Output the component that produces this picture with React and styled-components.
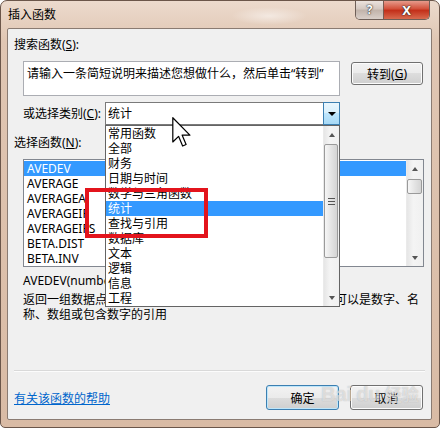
import React from 'react';
import styled, { createGlobalStyle } from 'styled-components';

const GlobalStyle = createGlobalStyle`
  body {
    margin: 0;
    background: #ffffff;
    font-family: "Noto Sans", "Noto Sans CJK SC", sans-serif;
    font-size: 12px;
    color: #000;
  }
  * {
    box-sizing: border-box;
  }
`;

const Window = styled.div`
  position: relative;
  width: 440px;
  height: 428px;
  display: flex;
  flex-direction: column;
  padding: 0 7px 7px 6px;
  border: 1px solid #6b564a;
  border-radius: 7px 7px 5px 5px;
  background: radial-gradient(ellipse 38px 9px at 268px 15px, rgba(255, 255, 255, 0.5), transparent),
    linear-gradient(#ecdacd, #e0c6b3 40px, #d9bba5);
  overflow: hidden;
`;

const TitleBar = styled.div`
  height: 27px;
  display: flex;
  align-items: flex-start;
`;

const Title = styled.div`
  margin: 6px 0 0 1px;
  line-height: 16px;
`;

const CaptionButtons = styled.div`
  margin: -1px 2px 0 auto;
  display: flex;
  border: 1px solid #6e5f58;
  border-top: none;
  border-radius: 0 0 5px 5px;
  overflow: hidden;
`;

const CaptionButton = styled.div`
  width: ${({ $w }) => $w}px;
  height: 19px;
  display: flex;
  align-items: center;
  justify-content: center;
  font-weight: bold;
  font-size: ${({ $close }) => ($close ? '13px' : '12px')};
  color: ${({ $close }) => ($close ? '#fff' : '#fff')};
  text-shadow: 0 0 2px #333, 0 0 1px #000;
  background: ${({ $close }) =>
    $close
      ? 'linear-gradient(#e9a496, #d3533d 45%, #c3301a 55%, #d86a4e)'
      : 'linear-gradient(#efe6e1, #d5c9c2 45%, #c2b4ab 55%, #d9cfc9)'};
  border-left: ${({ $close }) => ($close ? '1px solid #7a5a50' : 'none')};
`;

const Client = styled.div`
  position: relative;
  flex: 1;
  display: flex;
  flex-direction: column;
  background: #f0f0f0;
  border: 1px solid #8a7b72;
  border-radius: 2px;
  padding: 8px 8px 9px 6px;
`;

const Label = styled.div`
  line-height: 16px;
  margin-top: ${({ $top }) => $top || 0}px;
`;

const Key = styled.span`
  text-decoration: underline;
`;

const SearchRow = styled.div`
  display: flex;
  margin: 8px 0 0 9px;
`;

const SearchBox = styled.div`
  width: 317px;
  height: 35px;
  background: #fff;
  border: 1px solid #abadb3;
  padding: 4px 0 0 3px;
  line-height: 16px;
  white-space: nowrap;
  overflow: hidden;
`;

const Button = styled.div`
  width: ${({ $w }) => $w}px;
  height: ${({ $h }) => $h}px;
  margin-left: 11px;
  margin-top: ${({ $top }) => $top || 0}px;
  display: flex;
  align-items: center;
  justify-content: center;
  border: 1px solid ${({ $focus }) => ($focus ? '#3c7fb1' : '#707070')};
  border-radius: 3px;
  background: linear-gradient(#f2f2f2, #ebebeb 50%, #dddddd 50%, #cfcfcf);
  box-shadow: ${({ $focus }) => ($focus ? 'inset 0 0 0 1px #bde6fb' : 'inset 0 0 0 1px #fcfcfc')};
`;

const CategoryRow = styled.div`
  display: flex;
  align-items: center;
  margin: 6px 0 0 9px;
`;

const CategoryLabel = styled.div`
  width: 82px;
  line-height: 16px;
`;

const Combo = styled.div`
  position: relative;
  width: 235px;
  height: 23px;
  display: flex;
  background: #fff;
  border: 1px solid #7a7a7a;
`;

const ComboText = styled.div`
  flex: 1;
  padding-left: 2px;
  line-height: 21px;
`;

const ComboArrow = styled.div`
  width: 17px;
  margin: -1px -1px -1px 0;
  border: 1px solid #3c7fb1;
  background: linear-gradient(#eaf6fd, #d9f0fc 45%, #bee6fd 50%, #a7d9f5);
  display: flex;
  align-items: center;
  justify-content: center;

  &::after {
    content: '';
    border-left: 4px solid transparent;
    border-right: 4px solid transparent;
    border-top: 4px solid #000;
  }
`;

const Dropdown = styled.div`
  position: absolute;
  z-index: 3;
  top: 22px;
  left: -1px;
  width: 235px;
  height: 182px;
  display: flex;
  background: #fff;
  border: 1px solid #646464;
`;

const Items = styled.div`
  flex: 1;
  display: flex;
  flex-direction: column;
  padding-top: ${({ $pad }) => $pad || 0}px;
`;

const Item = styled.div`
  height: 15px;
  line-height: 15px;
  padding-left: ${({ $indent }) => $indent}px;
  white-space: nowrap;
  background: ${({ $selected }) => ($selected ? '#3399ff' : 'transparent')};
  color: ${({ $selected }) => ($selected ? '#fff' : '#000')};
`;

const Scrollbar = styled.div`
  width: ${({ $w }) => $w}px;
  display: flex;
  flex-direction: column;
  background: linear-gradient(90deg, #e6e6e6, #f4f4f4 40%, #f0f0f0);
  border-left: 1px solid #eaeaea;
`;

const ScrollArrow = styled.div`
  height: 17px;
  display: flex;
  align-items: center;
  justify-content: center;

  &::after {
    content: '';
    border-left: 3px solid transparent;
    border-right: 3px solid transparent;
    ${({ $down }) => ($down ? 'border-top: 4px solid #555;' : 'border-bottom: 4px solid #555;')}
  }
`;

const Track = styled.div`
  flex: 1;
  padding: ${({ $gap }) => $gap}px 1px 0 0;
`;

const Thumb = styled.div`
  height: ${({ $h }) => $h}px;
  display: flex;
  flex-direction: column;
  align-items: center;
  justify-content: center;
  gap: 2px;
  border: 1px solid #9a9a9a;
  border-radius: 2px;
  background: linear-gradient(90deg, #f6f6f6, #e4e4e4 50%, #d4d4d4);
`;

const Grip = styled.div`
  width: 7px;
  height: 1px;
  background: #555;
`;

const FuncList = styled.div`
  width: 401px;
  height: 108px;
  margin: 8px 0 0 9px;
  display: flex;
  background: #fff;
  border: 1px solid #828790;
`;

const Signature = styled.div`
  margin: 6px 0 0 9px;
  line-height: 15px;
`;

const Description = styled.div`
  margin: 4px 0 0 9px;
  line-height: 15px;
  white-space: nowrap;
`;

const Spacer = styled.div`
  flex: 1;
`;

const Separator = styled.div`
  height: 1px;
  margin: 0 -2px 14px 0;
  background: #d9d9d9;
  box-shadow: 0 1px 0 #fcfcfc;
`;

const Footer = styled.div`
  height: 25px;
  display: flex;
  align-items: center;
`;

const HelpLink = styled.a`
  color: #0066cc;
  text-decoration: underline;
  margin-right: auto;
`;

const RedBox = styled.div`
  position: absolute;
  z-index: 4;
  left: 77px;
  top: 159px;
  width: 123px;
  height: 50px;
  border: 4px solid #e3141c;
`;

const Cursor = styled.svg`
  position: absolute;
  z-index: 5;
  left: 164px;
  top: 88px;
`;

const Watermark = styled.div`
  position: absolute;
  z-index: 2;
  left: 313px;
  top: 352px;
  display: flex;
  align-items: baseline;
  gap: 4px;
  font-family: "Liberation Sans", "Noto Sans CJK SC", sans-serif;
  font-size: 20px;
  font-weight: bold;
  color: rgba(255, 255, 255, 0.55);
  text-shadow: 0 0 1px rgba(120, 120, 120, 0.5);
  pointer-events: none;
`;

const categories = [
  '常用函数', '全部', '财务', '日期与时间', '数学与三角函数', '统计',
  '查找与引用', '数据库', '文本', '逻辑', '信息', '工程',
];

const functions = ['AVEDEV', 'AVERAGE', 'AVERAGEA', 'AVERAGEIF', 'AVERAGEIFS', 'BETA.DIST', 'BETA.INV'];

function App() {
  return (
    <>
      <GlobalStyle />
      <Window>
        <TitleBar>
          <Title>插入函数</Title>
          <CaptionButtons>
            <CaptionButton $w={27}>?</CaptionButton>
            <CaptionButton $w={46} $close>X</CaptionButton>
          </CaptionButtons>
        </TitleBar>
        <Client>
          <Label>
            搜索函数(<Key>S</Key>):
          </Label>
          <SearchRow>
            <SearchBox>请输入一条简短说明来描述您想做什么，然后单击“转到”</SearchBox>
            <Button $w={72} $h={23} $top={1}>
              转到(<Key>G</Key>)
            </Button>
          </SearchRow>
          <CategoryRow>
            <CategoryLabel>
              或选择类别(<Key>C</Key>):
            </CategoryLabel>
            <Combo>
              <ComboText>统计</ComboText>
              <ComboArrow />
              <Dropdown>
                <Items>
                  {categories.map((c) => (
                    <Item key={c} $indent={2} $selected={c === '统计'}>
                      {c}
                    </Item>
                  ))}
                </Items>
                <Scrollbar $w={16}>
                  <ScrollArrow />
                  <Track $gap={1}>
                    <Thumb $h={114}>
                      <Grip />
                      <Grip />
                      <Grip />
                    </Thumb>
                  </Track>
                  <ScrollArrow $down />
                </Scrollbar>
              </Dropdown>
            </Combo>
          </CategoryRow>
          <Label $top={10}>
            选择函数(<Key>N</Key>):
          </Label>
          <FuncList>
            <Items $pad={1}>
              {functions.map((f, i) => (
                <Item key={f} $indent={3} $selected={i === 0}>
                  {f}
                </Item>
              ))}
            </Items>
            <Scrollbar $w={17}>
              <ScrollArrow />
              <Track $gap={2}>
                <Thumb $h={15} />
              </Track>
              <ScrollArrow $down />
            </Scrollbar>
          </FuncList>
          <Signature>AVEDEV(number1,number2,...)</Signature>
          <Description>
            返回一组数据点到其算术平均值的绝对偏差的平均值。参数可以是数字、名
            <br />
            称、数组或包含数字的引用
          </Description>
          <Spacer />
          <Separator />
          <Footer>
            <HelpLink>有关该函数的帮助</HelpLink>
            <Button $w={73} $h={25} $focus>
              确定
            </Button>
            <Button $w={73} $h={25}>
              取消
            </Button>
          </Footer>
          <RedBox />
          <Cursor width="19" height="31" viewBox="0 0 12.5 20.5">
            <path
              d="M0.5 0.5 L0.5 16.5 L4.3 12.8 L7 19.2 L9.3 18.2 L6.7 12 L11.8 12 Z"
              fill="#fff"
              stroke="#000"
              strokeWidth="0.8"
              strokeLinejoin="round"
            />
          </Cursor>
          <Watermark>
            <span>Bai</span>
            <span>du</span>
            <span style={{ fontSize: 17 }}>经验</span>
          </Watermark>
        </Client>
      </Window>
    </>
  );
}

export default App;
